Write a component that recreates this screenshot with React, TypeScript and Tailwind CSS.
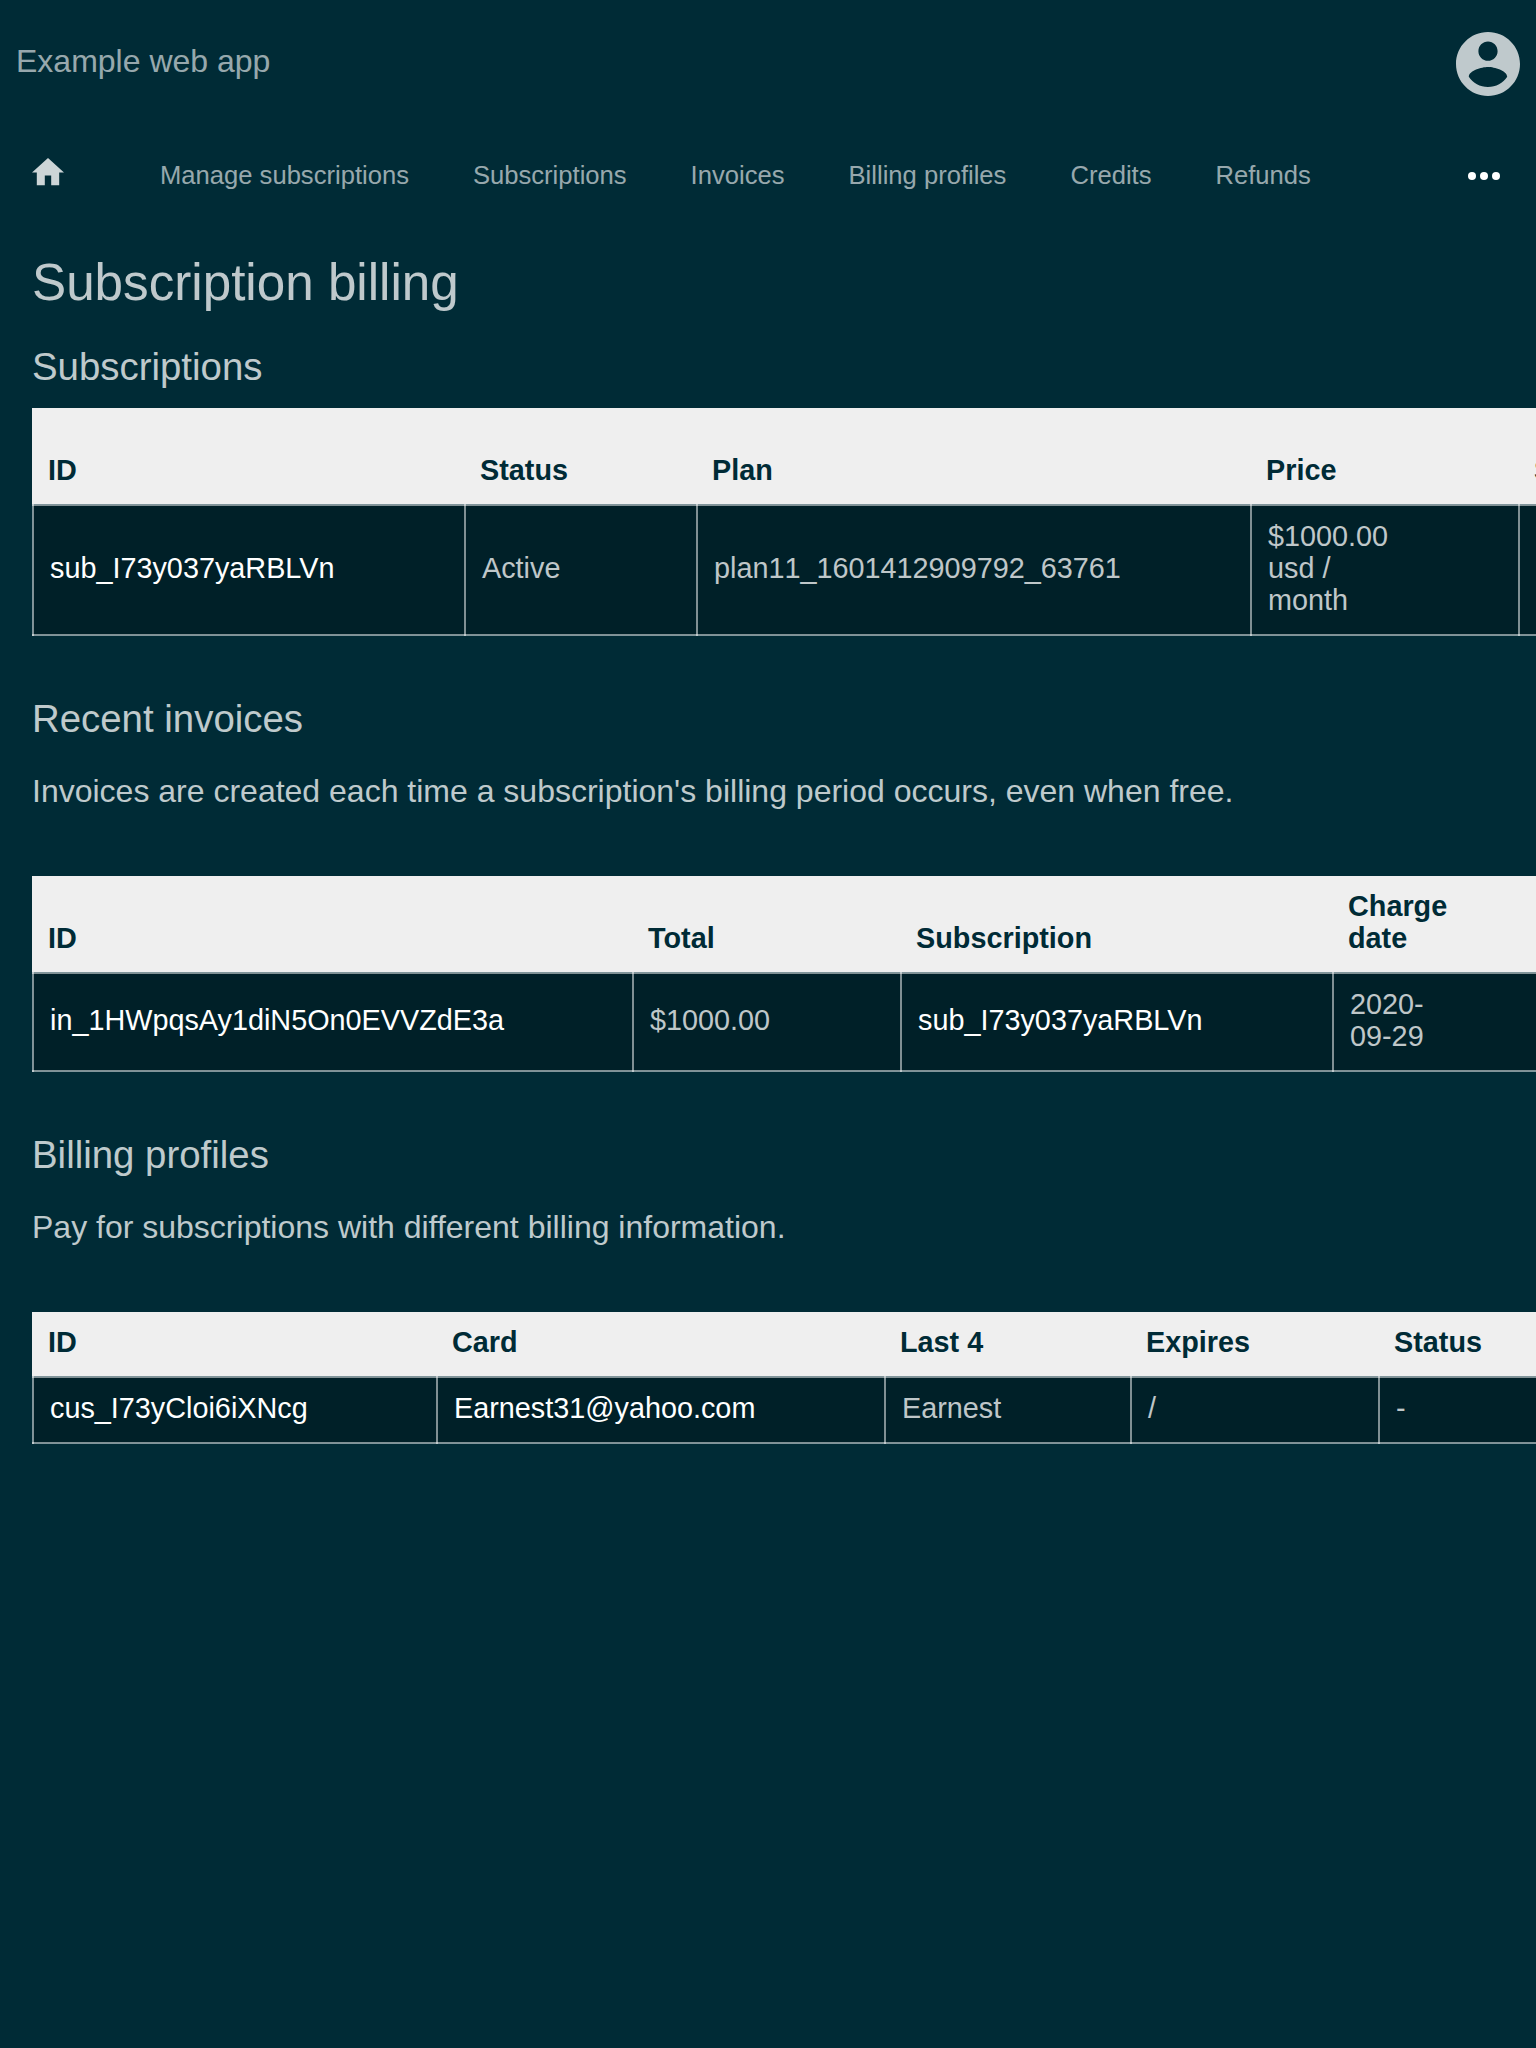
import { type ReactNode } from 'react';

type Cell = { text: ReactNode; link?: boolean };

const nav = ['Manage subscriptions', 'Subscriptions', 'Invoices', 'Billing profiles', 'Credits', 'Refunds'];

function DataTable({ cols, heads, cells, tall }: { cols: string[]; heads: ReactNode[]; cells: Cell[]; tall?: boolean }) {
  return (
    <div className="w-[1902px] text-[28.8px] leading-8">
      <div className={`flex items-end bg-[#efefef] pb-[18px] font-bold text-[#002b36] ${tall ? 'h-24' : 'h-16'}`}>
        {heads.map((h, i) => (
          <div key={i} className={`shrink-0 px-4 ${cols[i]}`}>
            {h}
          </div>
        ))}
      </div>
      <table className="w-full table-fixed border-collapse">
        <colgroup>
          {cols.map((c, i) => (
            <col key={i} className={c} />
          ))}
        </colgroup>
        <tbody>
          <tr>
            {cells.map((c, i) => (
              <td key={i} className="border-2 border-white/50 bg-[#002028] px-4 pt-[14px] pb-[18px] align-middle">
                <span className={c.link ? 'text-white' : 'text-white/75'}>{c.text}</span>
              </td>
            ))}
          </tr>
        </tbody>
      </table>
    </div>
  );
}

export default function App() {
  return (
    <div className="h-[2048px] w-[1536px] overflow-hidden bg-[#002b36] font-['Liberation_Sans',sans-serif] text-white/75">
      <header className="flex h-32 items-start justify-between px-4 pt-8">
        <div className="pt-[13px] text-[32px] leading-8 text-white/60">Example web app</div>
        <svg viewBox="2 2 20 20" className="size-16 fill-white/75">
          <path d="M12 2C6.48 2 2 6.48 2 12s4.48 10 10 10 10-4.48 10-10S17.52 2 12 2zm0 3c1.66 0 3 1.34 3 3s-1.34 3-3 3-3-1.34-3-3 1.34-3 3-3zm0 14.2c-2.5 0-4.71-1.28-6-3.22.03-1.99 4-3.08 6-3.08 1.99 0 5.97 1.09 6 3.08-1.29 1.94-3.5 3.22-6 3.22z" />
        </svg>
      </header>
      <nav className="flex h-24 items-center px-8 text-[25.6px] leading-8 text-white/60">
        <svg viewBox="2 3 20 17" className="-mt-2 mr-24 h-[27.2px] w-8 fill-white/80">
          <path d="M10 20v-6h4v6h5v-8h3L12 3 2 12h3v8z" />
        </svg>
        <div className="-mt-0.5 flex gap-16">
          {nav.map((n) => (
            <span key={n}>{n}</span>
          ))}
        </div>
        <svg viewBox="0 0 32 8" className="mr-1 ml-auto h-2 w-8 fill-white">
          <circle cx="4" cy="4" r="4" />
          <circle cx="16" cy="4" r="4" />
          <circle cx="28" cy="4" r="4" />
        </svg>
      </nav>
      <main className="pl-8">
        <h1 className="h-[110px] pt-[31px] text-[51.2px] leading-[56px]">Subscription billing</h1>
        <h2 className="h-[74px] pt-[12px] text-[38.4px] leading-[42px]">Subscriptions</h2>
        <DataTable
          tall
          cols={['w-[432px]', 'w-[232px]', 'w-[554px]', 'w-[268px]', 'w-[414px]']}
          heads={['ID', 'Status', 'Plan', 'Price', 'Start']}
          cells={[
            { text: 'sub_I73y037yaRBLVn', link: true },
            { text: 'Active' },
            { text: <span className="[font-kerning:none]">plan11_1601412909792_63761</span> },
            { text: <>$1000.00<br />usd /<br />month</> },
            { text: '' },
          ]}
        />
        <h2 className="mt-[62px] text-[38.4px] leading-[42px]">Recent invoices</h2>
        <p className="mt-8 mb-[66px] text-[32px] leading-[38px]">
          Invoices are created each time a subscription's billing period occurs, even when free.
        </p>
        <DataTable
          tall
          cols={['w-[600px]', 'w-[268px]', 'w-[432px]', 'w-[600px]']}
          heads={['ID', 'Total', 'Subscription', <>Charge<br />date</>]}
          cells={[
            { text: 'in_1HWpqsAy1diN5On0EVVZdE3a', link: true },
            { text: '$1000.00' },
            { text: 'sub_I73y037yaRBLVn', link: true },
            { text: <>2020-<br />09-29</> },
          ]}
        />
        <h2 className="mt-[62px] text-[38.4px] leading-[42px]">Billing profiles</h2>
        <p className="mt-8 mb-[66px] text-[32px] leading-[38px]">
          Pay for subscriptions with different billing information.
        </p>
        <DataTable
          cols={['w-[404px]', 'w-[448px]', 'w-[246px]', 'w-[248px]', 'w-[554px]']}
          heads={['ID', 'Card', 'Last 4', 'Expires', 'Status']}
          cells={[
            { text: 'cus_I73yCloi6iXNcg', link: true },
            { text: 'Earnest31@yahoo.com', link: true },
            { text: 'Earnest' },
            { text: '/' },
            { text: '-' },
          ]}
        />
      </main>
    </div>
  );
}
